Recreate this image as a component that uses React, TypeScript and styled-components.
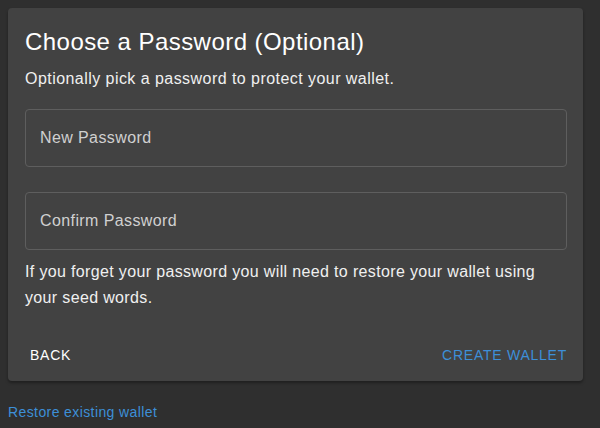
import React from "react";
import styled, { createGlobalStyle } from "styled-components";

const Global = createGlobalStyle`
  html, body { margin: 0; padding: 0; background: #2f2f2f; }
  body { font-family: "Liberation Sans", Arial, sans-serif; width: 600px; height: 428px; overflow: hidden; }
`;

const Page = styled.div`
  padding: 8px 17px 0 8px;
  display: flex;
  flex-direction: column;
`;

const Card = styled.div`
  background: #424242;
  border-radius: 4px;
  padding: 20px 16px 8px 17px;
  box-shadow: 0 2px 3px rgba(0,0,0,0.35);
  display: flex;
  flex-direction: column;
`;

const Title = styled.h1`
  margin: 0;
  font-size: 24px;
  font-weight: 400;
  letter-spacing: 0.45px;
  color: #ffffff;
  line-height: 28px;
`;

const Subtitle = styled.p`
  margin: 13px 0 0;
  font-size: 16px;
  letter-spacing: 0.45px;
  color: #f0f0f0;
  line-height: 20px;
`;

const Field = styled.div<{ $top: number }>`
  margin-top: ${p => p.$top}px;
  height: 58px;
  border: 1px solid #5e5e5e;
  border-radius: 4px;
  box-sizing: border-box;
  display: flex;
  align-items: center;
  padding-left: 14px;
  font-size: 16px;
  letter-spacing: 0.4px;
  color: #d0d0d0;
`;

const Helper = styled.p`
  margin: 9px 0 0;
  font-size: 16px;
  letter-spacing: 0.35px;
  line-height: 26px;
  color: #f0f0f0;
`;

const Actions = styled.div`
  margin-top: 26px;
  display: flex;
  justify-content: space-between;
  align-items: center;
  height: 36px;
`;

const TextButton = styled.button<{ $primary?: boolean }>`
  background: none;
  border: none;
  padding: 0 0 0 ${p => (p.$primary ? 0 : 5)}px;
  font-family: "Liberation Sans", Arial, sans-serif;
  font-size: 14px;
  letter-spacing: 0.75px;
  color: ${p => (p.$primary ? "#3d8fd8" : "#ffffff")};
  cursor: pointer;
`;

const Link = styled.a`
  margin-top: 23px;
  font-size: 14px;
  letter-spacing: 0.4px;
  line-height: 16px;
  color: #3d8fd8;
  text-decoration: none;
`;

export default function App() {
  return (
    <>
      <Global />
      <Page>
        <Card>
          <Title>Choose a Password (Optional)</Title>
          <Subtitle>Optionally pick a password to protect your wallet.</Subtitle>
          <Field $top={20}>New Password</Field>
          <Field $top={25}>Confirm Password</Field>
          <Helper>If you forget your password you will need to restore your wallet using your seed words.</Helper>
          <Actions>
            <TextButton>BACK</TextButton>
            <TextButton $primary>CREATE WALLET</TextButton>
          </Actions>
        </Card>
        <Link href="#">Restore existing wallet</Link>
      </Page>
    </>
  );
}
